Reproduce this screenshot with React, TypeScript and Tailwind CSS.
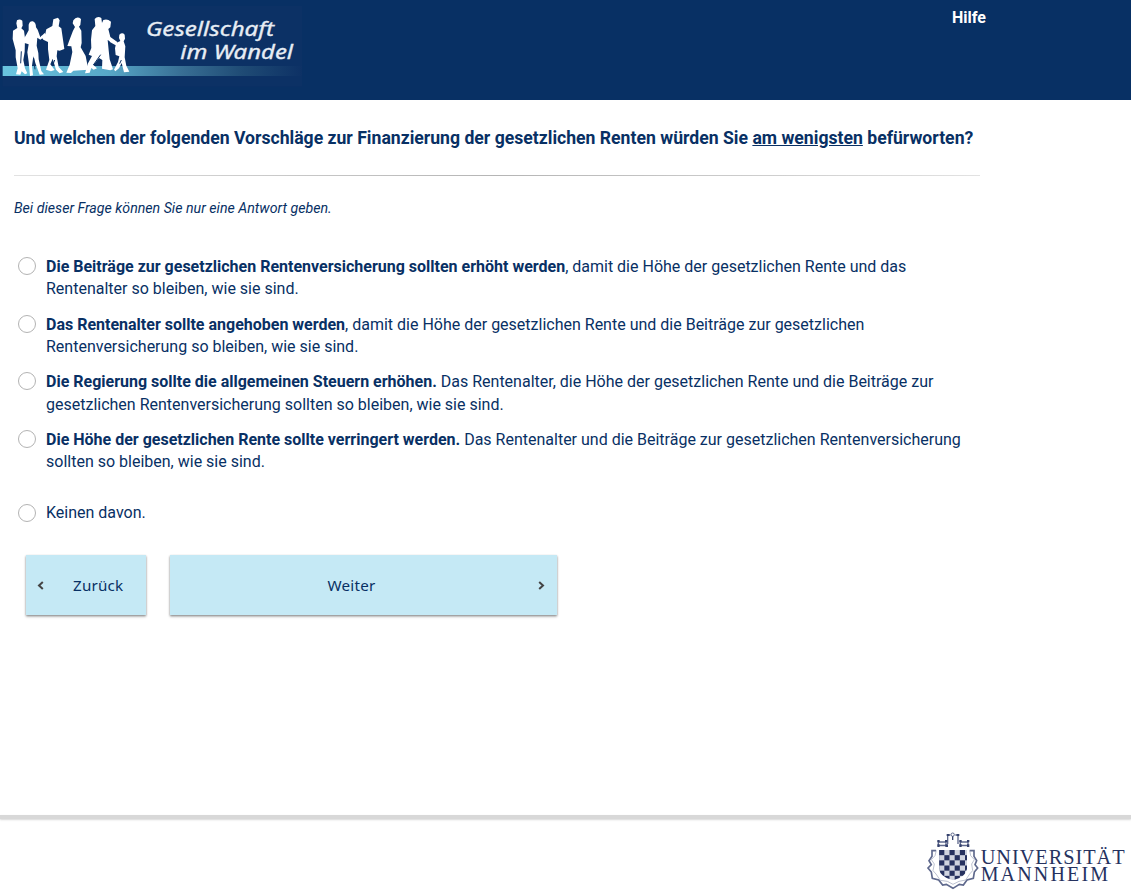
import React from "react";

function People() {
  return (
    <svg className="block h-[100px] w-[302px]" viewBox="0 0 906 300" role="img" aria-label="Gesellschaft im Wandel">
      <defs>
        <linearGradient id="band" x1="0" x2="1" y1="0" y2="0">
          <stop offset="0" stopColor="#69c4df" />
          <stop offset="0.35" stopColor="#58a8c8" />
          <stop offset="0.6" stopColor="#386e94" />
          <stop offset="0.8" stopColor="#1f4b75" />
          <stop offset="1" stopColor="#0d3165" />
        </linearGradient>
      </defs>
      <rect x="8" y="18" width="898" height="242" fill="#0c3165" />
      <rect x="8" y="198" width="898" height="30" fill="url(#band)" />
      <g fill="#fff">
        <path d="M51 61Q59 55 67 62L68 77L64 85L72 92L75 115L74 155L70 180L75 205L82 220L75 223L65 214L61 224L48 223L53 205L47 172L47 151L38 117L39 92L52 84L49 70Z" />
        <path d="M86 74Q89 63 98 64Q108 67 108 82L113 89L121 112L134 99L139 106L121 119L112 113L110 137L115 159L116 178L124 213L132 223L119 224L107 192L100 169L96 197L99 226L90 228L86 185L82 157L86 133L71 128L70 119L80 102L86 91Z" />
        <path d="M160 58L174 53L179 61L176 79L184 85L193 147L179 152L172 151L170 169L176 201L190 216L179 220L168 209L158 176L151 193L164 210L153 214L138 209L148 180L144 148L144 126L130 119L122 108L135 106L139 88L157 78Z" />
        <path d="M220 61Q230 47 243 57L241 75L237 80L244 92L245 129L242 142L257 168L265 209L220 212L213 219L199 218L209 194L217 156L214 139L202 138L207 124L219 92L225 81L218 70Z" />
        <path d="M284 57Q293 47 304 54L306 69L310 60Q322 55 333 65L331 82L325 87L331 111L352 126L350 133L323 120L326 151L329 178L339 208L331 211L306 206L307 180L297 174L280 195L291 205L281 209L274 204L269 218L255 220L264 190L276 168L266 164L274 144L273 119L276 91L286 78Z" />
        <path d="M358 104Q367 96 374 104L375 116L371 124L376 139L374 172L379 197L388 215L372 217L365 189L357 205L346 214L342 209L354 186L358 169L347 165L345 145L347 136L331 127L323 117L350 128L361 123L357 114Z" />
      </g>
      <path d="M64 154L62 190M101 174L105 208M164 180L158 196M302 164L280 195M364 180L359 191" stroke="#0c3165" strokeWidth="3" fill="none" />
      <g fill="#e7edf4" stroke="#e7edf4" strokeWidth="1" fontFamily="'Noto Sans', sans-serif" fontStyle="italic" fontSize="61">
        <text x="438" y="109" textLength="384" lengthAdjust="spacingAndGlyphs">Gesellschaft</text>
        <text x="541" y="178" textLength="338" lengthAdjust="spacingAndGlyphs">im Wandel</text>
      </g>
    </svg>
  );
}

function Crest() {
  const cells = [0, 1, 2, 3, 4, 5, 6];
  return (
    <svg className="block h-[76px] w-[211px]" viewBox="0 0 633 228" role="img" aria-label="Universität Mannheim">
      <defs>
        <clipPath id="shield">
          <path d="M57 108H141V165Q137 189 99 199Q61 189 57 165Z" />
        </clipPath>
      </defs>
      <g clipPath="url(#shield)">
        <rect x="53" y="106" width="92" height="96" fill="#d0d4e0" />
        {cells.map((r) =>
          cells.map((c) =>
            (r + c) % 2 === 1 ? (
              <rect key={`${r}-${c}`} x={42 + c * 15.5} y={108 + r * 15.5} width="15.5" height="15.5" fill="#26315f" />
            ) : null,
          ),
        )}
      </g>
      <g fill="none" stroke="#5f698d" strokeWidth="5">
        <path d="M48 110H36V127L27 140L34 152L24 162L34 174L37 193L56 198L68 213L79 211L99 223L118 211L130 213L141 198L160 193L163 174L173 162L165 152L170 140L162 127V110H149" />
        <path d="M49 109L45 125L34 137L43 150L39 170L48 180L61 199L82 202L99 211L117 202L137 198L149 180L158 170L155 150L163 137L152 125L149 109" strokeWidth="2" stroke="#9aa1b8" />
        <path d="M55 81V94H78V81M55 84H79M54 95H82M121 81V94H144V81M121 84H144M119 95H146M83 90V63H91M106 63H114V90" strokeWidth="4" />
        <circle cx="98" cy="62" r="5" strokeWidth="3" />
      </g>
      <path d="M52 78h7v7h-7zM75 78h7v7h-7zM52 91h7v8h-7zM76 91h8v8h-8zM118 78h7v7h-7zM141 78h7v7h-7zM118 91h7v8h-7zM141 91h7v8h-7zM80 60h8v6h-8zM110 60h8v6h-8zM96 67h4v11h-4z" fill="#36426e" />
      <g fill="#26325f" fontFamily="'Liberation Serif', serif" fontSize="61">
        <text x="182" y="150" textLength="432">UNIVERSITÄT</text>
        <text x="182" y="202" textLength="382" fontSize="60">MANNHEIM</text>
      </g>
    </svg>
  );
}

interface OptionProps {
  bold?: string;
  first: string;
  second?: string;
  className?: string;
}

function Option({ bold, first, second, className = "" }: OptionProps) {
  return (
    <label className={`flex gap-[10px] ${className}`}>
      <input
        type="radio"
        name="proposal"
        className="mt-[1.1px] size-[18px] shrink-0 appearance-none rounded-full border border-[#b3b3b3] bg-white checked:border-[5px] checked:border-[#083064]"
      />
      <span className="whitespace-nowrap text-[16px] leading-[22.4px]">
        {bold && <b className="font-bold">{bold}</b>}
        {first}
        {second && (
          <>
            <br />
            {second}
          </>
        )}
      </span>
    </label>
  );
}

export default function App() {
  return (
    <div className="flex h-[891px] w-full flex-col overflow-hidden bg-white font-[Roboto,sans-serif] text-[#083064]">
      <header className="flex h-[100px] shrink-0 justify-between bg-[#083064]">
        <People />
        <a className="mr-[145px] pt-[7px] text-[16px] leading-[22px] font-bold text-white">Hilfe</a>
      </header>
      <main className="flex h-[715px] shrink-0 flex-col pl-[14px]">
        <h1 className="mt-[25px] text-[17.61px] leading-[26px] font-bold whitespace-nowrap">
          Und welchen der folgenden Vorschläge zur Finanzierung der gesetzlichen Renten würden Sie{" "}
          <u>am wenigsten</u> befürworten?
        </h1>
        <div className="mt-[24px] h-px w-[966px] bg-linear-to-r from-[#e2e2e2] via-[#b5b5b5] to-[#e2e2e2]" />
        <p className="mt-[22px] text-[14.18px] leading-5 italic">Bei dieser Frage können Sie nur eine Antwort geben.</p>
        <div className="mt-[37.8px] flex flex-col gap-[12.9px] pl-1">
          <Option
            bold="Die Beiträge zur gesetzlichen Rentenversicherung sollten erhöht werden"
            first=", damit die Höhe der gesetzlichen Rente und das"
            second="Rentenalter so bleiben, wie sie sind."
          />
          <Option
            bold="Das Rentenalter sollte angehoben werden"
            first=", damit die Höhe der gesetzlichen Rente und die Beiträge zur gesetzlichen"
            second="Rentenversicherung so bleiben, wie sie sind."
          />
          <Option
            bold="Die Regierung sollte die allgemeinen Steuern erhöhen."
            first=" Das Rentenalter, die Höhe der gesetzlichen Rente und die Beiträge zur"
            second="gesetzlichen Rentenversicherung sollten so bleiben, wie sie sind."
          />
          <Option
            bold="Die Höhe der gesetzlichen Rente sollte verringert werden."
            first=" Das Rentenalter und die Beiträge zur gesetzlichen Rentenversicherung"
            second="sollten so bleiben, wie sie sind."
          />
          <Option className="mt-[15.8px]" first="Keinen davon." />
        </div>
        <div className="mt-[30px] flex gap-6 pl-3 font-['Noto_Sans',sans-serif] text-[15.2px] tracking-[0.2px]">
          <button className="flex h-[60px] w-[120px] items-center bg-[#c5e9f5] pl-[11px] shadow-[0_1px_2px_rgba(0,0,0,0.4),0_2px_3px_rgba(0,0,0,0.15)]">
            <svg className="mt-px h-[9px] w-[7px]" viewBox="0 0 7 9" fill="none" stroke="#444" strokeWidth="2">
              <path d="M5.8 1L2 4.5L5.8 8" />
            </svg>
            <span className="mt-px ml-[29px]">Zurück</span>
          </button>
          <button className="flex h-[60px] w-[387px] items-center bg-[#c5e9f5] pr-[12px] shadow-[0_1px_2px_rgba(0,0,0,0.4),0_2px_3px_rgba(0,0,0,0.15)]">
            <span className="mt-px flex-1 pr-[5px] text-center">Weiter</span>
            <svg className="mt-px h-[9px] w-[7px]" viewBox="0 0 7 9" fill="none" stroke="#444" strokeWidth="2">
              <path d="M1.2 1L5 4.5L1.2 8" />
            </svg>
          </button>
        </div>
      </main>
      <footer className="flex h-[76px] shrink-0 flex-col items-end">
        <div className="-mb-[5px] h-[4px] w-full shrink-0 bg-[#d8d8d8] shadow-[0_1px_2px_#d8d8d8]" />
        <Crest />
      </footer>
    </div>
  );
}
